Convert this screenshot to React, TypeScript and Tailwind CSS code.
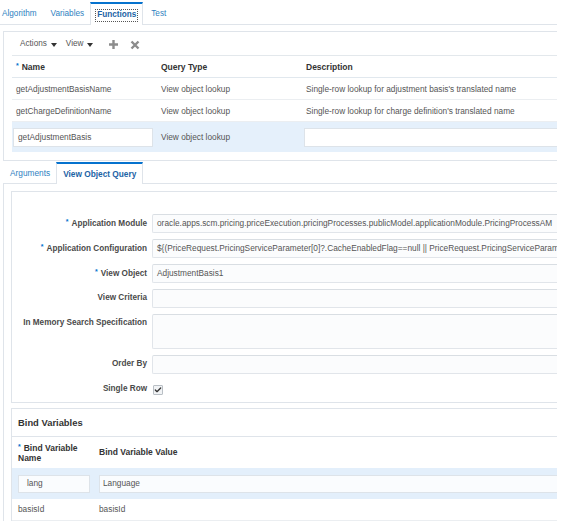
import { Check } from 'lucide-react';

const link = 'text-[#2f7fc1]';

function Req() {
    return <span className="mr-[3px] align-[2px] text-[7px] text-[#0572ce]">*</span>;
}

function Caret() {
    return (
        <svg width="6" height="4" viewBox="0 0 6 4">
            <path d="M0 0h6L3 4z" fill="#333" />
        </svg>
    );
}

function FormRow({
    label,
    required,
    value,
    tall,
}: {
    label: string;
    required?: boolean;
    value?: string;
    tall?: boolean;
}) {
    return (
        <div className={`flex gap-[5px] ${tall ? 'items-start' : 'items-center'}`}>
            <div
                className={`w-[135px] shrink-0 text-right text-[8.2px] font-bold text-[#4a4a4a] ${tall ? 'pt-[5px]' : ''}`}>
                {required && <Req />}
                {label}
            </div>
            <div
                className={`flex flex-1 items-center overflow-hidden whitespace-nowrap rounded-l-[2px] border border-r-0 border-[#e1e5ea] border-t-[#d9dee3] bg-[#fbfcfd] pl-[4px] text-[8.3px] text-[#555] ${tall ? 'h-[35px]' : 'h-[19px]'}`}>
                {value}
            </div>
        </div>
    );
}

export default function App() {
    const rows = [
        ['getAdjustmentBasisName', 'View object lookup', "Single-row lookup for adjustment basis's translated name"],
        ['getChargeDefinitionName', 'View object lookup', "Single-row lookup for charge definition's translated name"],
    ];

    return (
        <div className="h-[524px] w-[561px] overflow-hidden bg-white font-['Liberation_Sans',Arial,sans-serif] leading-none">
            <div className="w-[557px]">
                {/* top tabs */}
                <div className="flex h-[25px] items-stretch border-b border-[#dfe4ea] text-[8.2px]">
                    <span className={`ml-[2px] flex items-center pt-[5px] ${link}`}>Algorithm</span>
                    <span className={`ml-[14px] flex items-center pt-[5px] ${link}`}>Variables</span>
                    <div className="relative top-px ml-[6px] flex h-[23px] items-center self-end border-x border-t-2 border-x-[#dfe4ea] border-t-[#0572ce] bg-white px-[4px] pt-[2px]">
                        <span className="border border-dotted border-[#555] px-px py-[1px] font-bold text-[#1c63a5]">
                            Functions
                        </span>
                    </div>
                    <span className={`ml-[8px] flex items-center pt-[5px] ${link}`}>Test</span>
                </div>

                {/* functions panel */}
                <div className="ml-[3px] mt-[6px] h-[130px] border-y border-l border-[#dfe4ea]">
                    <div className="ml-[8px] flex h-[24px] items-center gap-[4px] border-b border-[#e3e8ec] pl-[8px] pt-[2px] text-[8.2px] text-[#555]">
                        <span>Actions</span>
                        <Caret />
                        <span className="ml-[5px]">View</span>
                        <Caret />
                        <svg width="11" height="11" viewBox="0 0 11 11" className="ml-[11px]">
                            <path d="M5.5 1v9M1 5.5h9" stroke="#8c8c8c" strokeWidth="2.4" />
                        </svg>
                        <svg width="10" height="10" viewBox="0 0 10 10" className="ml-[7px]">
                            <path d="M1.5 1.5l7 7M8.5 1.5l-7 7" stroke="#8c8c8c" strokeWidth="2.4" />
                        </svg>
                    </div>
                    <div className="ml-[8px]">
                        <div className="flex h-[22px] items-center border-b border-[#e1e8ee] pt-px text-[8.5px] font-bold text-[#333]">
                            <div className="w-[145px] pl-[4px]">
                                <Req />
                                Name
                            </div>
                            <div className="w-[145px] pl-[4px]">Query Type</div>
                            <div className="pl-[4px]">Description</div>
                        </div>
                        {rows.map((r) => (
                            <div
                                key={r[0]}
                                className="flex h-[22px] items-center border-b border-[#ebeef1] pt-px text-[8.3px] text-[#555]">
                                <div className="w-[145px] pl-[4px]">{r[0]}</div>
                                <div className="w-[145px] pl-[4px]">{r[1]}</div>
                                <div className="pl-[4px]">{r[2]}</div>
                            </div>
                        ))}
                        <div className="flex h-[30px] items-center bg-[#e5f0fb] text-[8.3px] text-[#555]">
                            <div className="w-[145px] pl-px">
                                <div className="flex h-[19px] w-[140px] items-center border border-[#dde3e9] bg-white pl-[4px]">
                                    getAdjustmentBasis
                                </div>
                            </div>
                            <div className="w-[147px] pl-[4px]">View object lookup</div>
                            <div className="h-[19px] flex-1 border border-r-0 border-[#dde3e9] bg-white" />
                        </div>
                    </div>
                </div>

                {/* sub tabs */}
                <div className="ml-[3px] flex h-[23px] items-stretch border-b border-[#dfe4ea] text-[8.3px]">
                    <span className={`ml-[7px] flex items-center pt-[2px] ${link}`}>Arguments</span>
                    <div className="relative top-px ml-[6px] flex h-[22px] items-center self-end border-x border-t-2 border-x-[#dfe4ea] border-t-[#0572ce] bg-white px-[6px] font-bold text-[#1c63a5]">
                        View Object Query
                    </div>
                </div>

                <div className="ml-[3px] border-l border-[#dfe4ea] pt-[7px]">
                    {/* form box */}
                    <div className="ml-[7px] flex h-[212px] flex-col gap-[6px] border-y border-l border-[#dfe4ea] pb-[3px] pt-[22px]">
                        <FormRow
                            label="Application Module"
                            required
                            value="oracle.apps.scm.pricing.priceExecution.pricingProcesses.publicModel.applicationModule.PricingProcessAM"
                        />
                        <FormRow
                            label="Application Configuration"
                            required
                            value="${(PriceRequest.PricingServiceParameter[0]?.CacheEnabledFlag==null || PriceRequest.PricingServiceParame"
                        />
                        <FormRow label="View Object" required value="AdjustmentBasis1" />
                        <FormRow label="View Criteria" />
                        <FormRow label="In Memory Search Specification" tall />
                        <FormRow label="Order By" />
                        <div className="flex h-[19px] items-center gap-[5px]">
                            <div className="w-[135px] shrink-0 text-right text-[8.2px] font-bold text-[#4a4a4a]">
                                Single Row
                            </div>
                            <div className="ml-px flex h-[10px] w-[10px] items-center justify-center rounded-[1px] border border-[#b9bfc5] bg-[#f1f3f5]">
                                <Check size={8} strokeWidth={4} color="#333" />
                            </div>
                        </div>
                    </div>

                    {/* bind variables */}
                    <div className="ml-[7px] mt-[5px] border-l border-t border-[#dfe4ea]">
                        <div className="flex h-[28px] items-center border-b border-[#dfe4ea] pl-[6px] text-[9.4px] font-bold text-[#333]">
                            Bind Variables
                        </div>
                        <div className="flex h-[31px] items-center text-[8.5px] font-bold leading-[9.5px] text-[#333]">
                            <div className="w-[83px] pl-[6px]">
                                <Req />
                                Bind Variable
                                <br />
                                Name
                            </div>
                            <div className="pl-[4px]">Bind Variable Value</div>
                        </div>
                        <div className="flex h-[31px] items-center bg-[#e3effb] text-[8.3px] text-[#555]">
                            <div className="w-[83px] pl-[6px]">
                                <div className="flex h-[18px] w-[72px] items-center border border-[#dde3e9] bg-[#fafcfe] pl-[8px]">
                                    lang
                                </div>
                            </div>
                            <div className="ml-[4px] flex h-[18px] flex-1 items-center border border-r-0 border-[#dde3e9] bg-[#fafcfe] pl-[3px]">
                                Language
                            </div>
                        </div>
                        <div className="flex h-[22px] items-center border-b border-[#ebeef1] text-[8.3px] text-[#555]">
                            <div className="w-[83px] pl-[6px]">basisId</div>
                            <div className="pl-[4px]">basisId</div>
                        </div>
                    </div>
                </div>
            </div>
        </div>
    );
}
